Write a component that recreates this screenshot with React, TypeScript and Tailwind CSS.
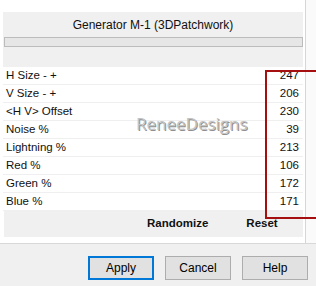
const rows: [string, number][] = [
  ['H Size - +', 247],
  ['V Size - +', 206],
  ['<H V> Offset', 230],
  ['Noise %', 39],
  ['Lightning %', 213],
  ['Red %', 106],
  ['Green %', 172],
  ['Blue %', 171],
];

function DialogButton({ label, active }: { label: string; active?: boolean }) {
  return (
    <button
      className={`w-[66px] h-[24px] text-[12px] text-black bg-[#e1e1e1] ${
        active ? 'border-2 border-[#0078d7]' : 'border border-[#adadad]'
      }`}
    >
      {label}
    </button>
  );
}

export default function App() {
  return (
    <div className="relative w-[316px] h-[286px] bg-white overflow-hidden flex flex-col font-['Liberation_Sans',Arial,sans-serif] text-[#111]">
      {/* upper part with filter settings */}
      <div className="flex h-[244px] border-b border-[#d8d8d8]">
        <div className="w-[305px] pl-[3px] pt-[12px] flex flex-col">
          <div className="w-[300px] h-[55px] bg-[#f0f0f0] flex flex-col">
            <div className="h-[25px] flex items-center justify-center text-[12px]">
              Generator M-1 (3DPatchwork)
            </div>
            <div className="ml-[1px] w-[299px] h-[10px] bg-[#e6e6e6] border border-[#bcbcbc]" />
          </div>

          <div className="relative w-[300px] flex flex-col">
            {rows.map(([label, value]) => (
              <div
                key={label}
                className="h-[18px] flex items-center justify-between border-b border-[#efefef] pl-[3px] pr-[4px] text-[11.5px]"
              >
                <span>{label}</span>
                <span>{value}</span>
              </div>
            ))}
            {/* watermark */}
            <div className="absolute left-[133px] top-[44px] text-[17px] text-[#c4c4c4] font-['Open_Sans',sans-serif] [text-shadow:1px_1px_0_#8f8f8f]">
              ReneeDesigns
            </div>
          </div>

          <div className="ml-[1px] w-[299px] h-[26px] bg-[#f0f0f0] flex items-center text-[11.5px] font-bold">
            <span className="ml-[143px]">Randomize</span>
            <span className="ml-[38px]">Reset</span>
          </div>
        </div>
        <div className="w-[1px] bg-[#d6d6d6]" />
        <div className="flex-1 bg-[#fafafa]" />
      </div>

      {/* dialog buttons */}
      <div className="flex-1 bg-[#f0f0f0] flex justify-end gap-[11px] pt-[12px] pr-[8px]">
        <DialogButton label="Apply" active />
        <DialogButton label="Cancel" />
        <DialogButton label="Help" />
      </div>

      {/* red annotation box, open to the right edge */}
      <div className="absolute left-[265px] right-0 top-[70px] h-[149px] border-l-2 border-t-2 border-b-2 border-[#a50f0f]" />
    </div>
  );
}
